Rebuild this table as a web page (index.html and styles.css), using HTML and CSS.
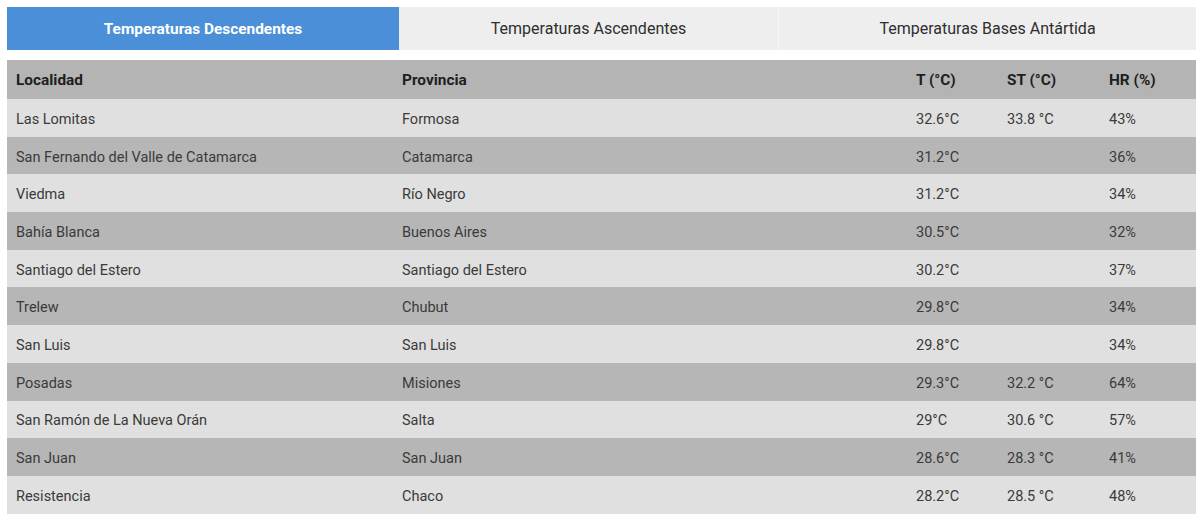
FILE: index.html
```html
<!DOCTYPE html>
<html lang="es">
<head>
<meta charset="utf-8">
<link rel="stylesheet" href="styles.css">
</head>
<body>
<div class="page">
  <div class="tabs">
    <div class="tab tab-desc active">Temperaturas Descendentes</div>
    <div class="tab tab-asc">Temperaturas Ascendentes</div>
    <div class="tab tab-ant">Temperaturas Bases Antártida</div>
  </div>
  <div class="table">
    <div class="row head">
      <div class="c">Localidad</div><div class="c">Provincia</div><div class="c">T (°C)</div><div class="c">ST (°C)</div><div class="c">HR (%)</div>
    </div>
    <div class="row light"><div class="c">Las Lomitas</div><div class="c">Formosa</div><div class="c">32.6°C</div><div class="c">33.8 °C</div><div class="c">43%</div></div>
    <div class="row dark"><div class="c">San Fernando del Valle de Catamarca</div><div class="c">Catamarca</div><div class="c">31.2°C</div><div class="c"></div><div class="c">36%</div></div>
    <div class="row light"><div class="c">Viedma</div><div class="c">Río Negro</div><div class="c">31.2°C</div><div class="c"></div><div class="c">34%</div></div>
    <div class="row dark"><div class="c">Bahía Blanca</div><div class="c">Buenos Aires</div><div class="c">30.5°C</div><div class="c"></div><div class="c">32%</div></div>
    <div class="row light"><div class="c">Santiago del Estero</div><div class="c">Santiago del Estero</div><div class="c">30.2°C</div><div class="c"></div><div class="c">37%</div></div>
    <div class="row dark"><div class="c">Trelew</div><div class="c">Chubut</div><div class="c">29.8°C</div><div class="c"></div><div class="c">34%</div></div>
    <div class="row light"><div class="c">San Luis</div><div class="c">San Luis</div><div class="c">29.8°C</div><div class="c"></div><div class="c">34%</div></div>
    <div class="row dark"><div class="c">Posadas</div><div class="c">Misiones</div><div class="c">29.3°C</div><div class="c">32.2 °C</div><div class="c">64%</div></div>
    <div class="row light"><div class="c">San Ramón de La Nueva Orán</div><div class="c">Salta</div><div class="c">29°C</div><div class="c">30.6 °C</div><div class="c">57%</div></div>
    <div class="row dark"><div class="c">San Juan</div><div class="c">San Juan</div><div class="c">28.6°C</div><div class="c">28.3 °C</div><div class="c">41%</div></div>
    <div class="row light"><div class="c">Resistencia</div><div class="c">Chaco</div><div class="c">28.2°C</div><div class="c">28.5 °C</div><div class="c">48%</div></div>
  </div>
</div>
</body>
</html>
```
FILE: styles.css
```css
* { box-sizing: border-box; }
html, body { margin: 0; padding: 0; background: #ffffff; }
body { font-family: Roboto, "Liberation Sans", sans-serif; overflow: hidden; }
.page { padding: 7px 0 0 7px; width: 1196px; }
.tabs { display: flex; height: 43px; }
.tab {
  display: flex; align-items: center; justify-content: center;
  background: #eeeeee; color: #2e2e2e; font-size: 16px; font-weight: 400;
}
.tab-desc { width: 392px; }
.tab-asc { width: 380px; border-right: 1px solid #f8f8f8; }
.tab-ant { flex: 1; }
.tab.active { background: #4a8fd8; color: #ffffff; font-weight: 700; font-size: 15.4px; }
.table { margin-top: 10px; }
.row {
  display: grid;
  grid-template-columns: 386px 514px 91px 102px 96px;
  height: 37.7px; align-items: center;
  font-size: 14.5px; color: #3a3a3a;
}
.row .c { padding: 3px 0 0 9px; white-space: nowrap; }
.head { height: 39px; background: #b4b4b4; color: #1e1e1e; font-weight: 700; font-size: 15.4px; }
.head .c { padding-top: 0; }
.light { background: #e0e0e0; }
.dark { background: #b6b6b6; }
```
